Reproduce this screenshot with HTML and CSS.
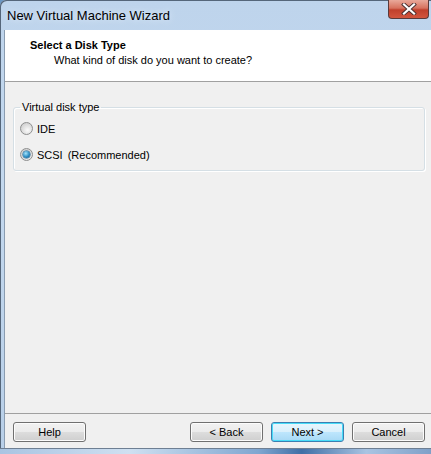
FILE: index.html
```html
<!DOCTYPE html>
<html>
	<head>
		<meta charset="UTF-8">
		<title>New Virtual Machine Wizard</title>
		<link rel="stylesheet" href="styles.css">
	</head>
	<body>
		<div class="window">
			<div class="titlebar">
				<span class="caption">New Virtual Machine Wizard</span>
				<span class="close">
					<svg width="16" height="12" viewBox="0 0 16 12">
						<path d="M3 1.5 L13 10.5 M13 1.5 L3 10.5" stroke="#4a3030" stroke-width="4" stroke-linecap="square"/>
						<path d="M3 1.5 L13 10.5 M13 1.5 L3 10.5" stroke="#ffffff" stroke-width="2.2" stroke-linecap="square"/>
					</svg>
				</span>
			</div>
			<div class="client">
				<header class="head">
					<h1>Select a Disk Type</h1>
					<p>What kind of disk do you want to create?</p>
				</header>
				<main class="page">
					<fieldset class="group">
						<legend>Virtual disk type</legend>
						<label class="option"><span class="radio"></span>IDE</label>
						<label class="option"><span class="radio checked"></span>SCSI<span class="note">(Recommended)</span></label>
					</fieldset>
				</main>
				<footer class="buttons">
					<button>Help</button>
					<span class="spacer"></span>
					<button>&lt; Back</button>
					<button class="default">Next &gt;</button>
					<button>Cancel</button>
				</footer>
			</div>
			<div class="frame-bottom"></div>
		</div>
	</body>
</html>
```
FILE: styles.css
```css
html, body {
    margin: 0; padding: 0;
    width: 431px; height: 454px;
    overflow: hidden;
    background: #6b97c4;
}

body {
    font: 11px "Liberation Sans", Arial, sans-serif;
    color: #000;
}

.window {
    width: 431px; height: 454px;
    display: flex; flex-direction: column;
    background: linear-gradient(#bed4ec, #c3d8ee 40%, #b8cfe8);
    border-top-left-radius: 6px;
    box-shadow: inset 1px 1px 0 #55667a;
}

.titlebar {
    height: 30px;
    flex: none;
    display: flex; align-items: flex-start;
}

.caption {
    font: 13px "Liberation Sans", Arial, sans-serif;
    color: #000;
    margin: 8px 0 0 7px;
    flex: 1;
    text-shadow: 0 0 6px #e6f0fa;
}

.close {
    width: 41px; height: 19px;
    margin-right: 2px;
    box-sizing: border-box;
    border: 1px solid #5a3a3a;
    border-top: none;
    border-radius: 0 0 4px 4px;
    background: linear-gradient(#e9a99a, #d7725e 45%, #c0402c 55%, #d2553e);
    display: flex; align-items: center; justify-content: center;
}

.client {
    flex: 1;
    margin-left: 5px;
    background: #f0f0f0;
    display: flex; flex-direction: column;
    box-shadow: -1px 0 0 #8a9cb0;
}

.head {
    height: 52px;
    flex: none;
    background: #fff;
    border-bottom: 1px solid #a0a0a0;
    padding: 9px 0 0 25px;
    box-sizing: border-box;
}

.head h1 {
    font-size: 11px; font-weight: bold;
    margin: 0;
    line-height: 13px;
}

.head p {
    margin: 2px 0 0 24px;
    line-height: 13px;
}

.page {
    flex: 1;
    padding: 19px 0 0 8px;
}

.group {
    width: 412px; height: 70px;
    box-sizing: border-box;
    margin: 0; padding: 8px 0 0 2px;
    border: 1px solid #d5dfe5;
    border-radius: 3px;
    box-shadow: inset 1px 1px 0 #fff, 1px 1px 0 #fff;
}

.group legend {
    padding: 0 2px;
    margin-left: 4px;
    line-height: 13px;
}

.option {
    display: flex; align-items: center;
    height: 13px;
    margin-bottom: 13px;
}

.radio {
    width: 13px; height: 13px;
    box-sizing: border-box;
    border-radius: 50%;
    border: 1px solid #8e8f8f;
    background: radial-gradient(circle at 60% 65%, #fbfbfb, #dcdcdc 55%, #c4c4c4);
    margin: 0 4px 0 4px;
    display: flex; align-items: center; justify-content: center;
}

.radio.checked::after {
    content: "";
    width: 7px; height: 7px;
    border-radius: 50%;
    background: radial-gradient(circle at 40% 35%, #a7e4fb, #2c8dc3 55%, #0c4e7f);
    box-shadow: 0 0 0 0.5px #1c5a85;
}

.note {
    margin-left: 5px;
}

.buttons {
    height: 35px;
    flex: none;
    box-sizing: border-box;
    border-top: 1px solid #a0a0a0;
    padding: 8px 6px 0 8px;
    display: flex; align-items: flex-start; gap: 8px;
}

.spacer {
    flex: 1;
}

.buttons button {
    width: 73px; height: 20px;
    padding: 0;
    font: 11px "Liberation Sans", Arial, sans-serif;
    color: #000;
    border: 1px solid #707070;
    border-radius: 3px;
    background: linear-gradient(#f2f2f2, #ebebeb 50%, #dddddd 50%, #cfcfcf);
    box-shadow: inset 0 0 0 1px #fcfcfc;
}

.buttons button.default {
    border-color: #3c7fb1;
    background: linear-gradient(#eaf6fd, #d9f0fc 50%, #bee6fd 50%, #a7d9f5);
    box-shadow: inset 0 0 0 1px #48dcf8;
}

.frame-bottom {
    height: 5px;
    flex: none;
    border-top: 1px solid #6e7f93;
    background: linear-gradient(90deg, #a9c4e2, #cfe0f1 30%, #7fa6d0 60%, #3f6fa6 70%, #a9c4e2 85%, #7fa0c8);
}
```
